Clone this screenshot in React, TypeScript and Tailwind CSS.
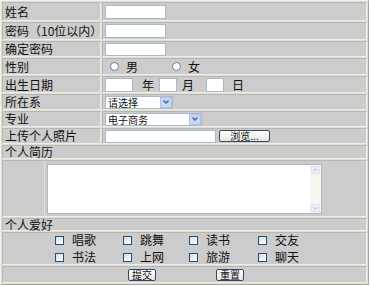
import type { ReactNode } from 'react'

const font = { fontFamily: '"Noto Sans CJK SC", "Noto Sans", sans-serif' }

// classic inset cell look of an old table border=1 page
const cell =
  'p-0 bg-[#cccccc] border border-t-[#b9b6ad] border-l-[#b9b6ad] border-b-[#efede6] border-r-[#efede6] align-middle'

function Row({ label, h, children }: { label: string; h: number; children?: ReactNode }) {
  return (
    <tr>
      <td className={cell}>
        <div className="flex items-center pl-[2px] text-[12px] leading-[14px]" style={{ height: h }}>
          {label}
        </div>
      </td>
      <td className={cell}>
        <div className="flex items-center pl-[1px]" style={{ height: h }}>
          {children}
        </div>
      </td>
    </tr>
  )
}

function TextBox({ w, h = 14 }: { w: number; h?: number }) {
  return (
    <span
      className="inline-block bg-white border border-[#a5b9d1]"
      style={{ width: w, height: h }}
    />
  )
}

function Radio({ label }: { label: string }) {
  return (
    <span className="flex items-center">
      <span className="w-[9px] h-[9px] rounded-full border border-[#5b7ea6] bg-white" />
      <span className="ml-[7px] text-[12px] leading-[14px]">{label}</span>
    </span>
  )
}

function Select({ w, text }: { w: number; text: string }) {
  return (
    <span
      className="flex items-center justify-between bg-white border border-[#a5b9d1] h-[13px]"
      style={{ width: w }}
    >
      <span className="pl-[2px] text-[10px] leading-[11px]">{text}</span>
      <span className="flex items-center justify-center w-[12px] h-[11px] bg-[#c8d6f5] border border-[#b0c3ea]">
        <svg width="8" height="6" viewBox="0 0 8 6">
          <path d="M1.5 1.5 L4 4 L6.5 1.5" fill="none" stroke="#4d6185" strokeWidth="1.4" />
        </svg>
      </span>
    </span>
  )
}

function Check({ label }: { label: string }) {
  return (
    <span className="flex items-center">
      <span className="w-[9px] h-[9px] border border-[#1f4f7d] bg-gradient-to-br from-[#dcdcd6] to-white" />
      <span className="ml-[8px] text-[12px] leading-[14px]">{label}</span>
    </span>
  )
}

function SmallButton({ label, w }: { label: string; w: number }) {
  return (
    <span
      className="flex items-center justify-center h-[12px] rounded-[2px] border border-[#2f4a6b] bg-gradient-to-b from-white to-[#e6e4dc] text-[10px] leading-[10px]"
      style={{ width: w }}
    >
      {label}
    </span>
  )
}

export default function App() {
  return (
    <div className="w-[371px] h-[286px] bg-white text-[#111]" style={font}>
      <table className="w-[369px] border-separate border-spacing-[1px] bg-[#e0ddd5] border border-t-[#f2f0ea] border-l-[#f2f0ea] border-b-[#a9a598] border-r-[#a9a598]">
        <colgroup>
          <col className="w-[99px]" />
          <col />
        </colgroup>
        <tbody>
          <Row label="姓名" h={17}>
            <span className="pl-[1px] flex"><TextBox w={61} /></span>
          </Row>
          <Row label="密码（10位以内）" h={16}>
            <span className="pl-[1px] flex"><TextBox w={61} /></span>
          </Row>
          <Row label="确定密码" h={14}>
            <span className="pl-[1px] flex"><TextBox w={61} h={13} /></span>
          </Row>
          <Row label="性别" h={15}>
            <span className="flex items-center pl-[6px] gap-[34px]">
              <Radio label="男" />
              <Radio label="女" />
            </span>
          </Row>
          <Row label="出生日期" h={15}>
            <span className="flex items-center pl-[1px] text-[12px] leading-[14px]">
              <TextBox w={28} h={14} />
              <span className="ml-[9px] mr-[5px]">年</span>
              <TextBox w={18} h={14} />
              <span className="ml-[5px] mr-[12px]">月</span>
              <TextBox w={18} h={14} />
              <span className="ml-[8px]">日</span>
            </span>
          </Row>
          <Row label="所在系" h={14}>
            <span className="pl-[1px] flex"><Select w={68} text="请选择" /></span>
          </Row>
          <Row label="专业" h={14}>
            <span className="pl-[1px] flex"><Select w={97} text="电子商务" /></span>
          </Row>
          <Row label="上传个人照片" h={14}>
            <span className="flex items-center pl-[1px]">
              <TextBox w={111} h={13} />
              <span className="ml-[3px]">
                <SmallButton label="浏览..." w={51} />
              </span>
            </span>
          </Row>
          <tr>
            <td colSpan={2} className={cell}>
              <div className="flex items-center h-[12px] pl-[2px] text-[12px] leading-[14px]">个人简历</div>
            </td>
          </tr>
          <tr>
            <td colSpan={2} className={cell}>
              <div className="flex items-center h-[55px]">
                <div className="w-[42px] h-full border-r border-[#e3e0d8]" />
                <div className="ml-[2px] flex w-[275px] h-[50px] bg-white border border-[#a5b9d1]">
                  <div className="flex-1" />
                  <div className="w-[11px] h-full bg-[#f6f5f0] flex flex-col justify-between items-center py-[1px]">
                    <svg width="9" height="8" viewBox="0 0 9 8">
                      <rect x="0.5" y="0.5" width="8" height="7" fill="#eef0f6" stroke="#dfe3ec" />
                      <path d="M2 5 L4.5 2.5 L7 5" fill="none" stroke="#b7bccb" strokeWidth="1" />
                    </svg>
                    <svg width="9" height="8" viewBox="0 0 9 8">
                      <rect x="0.5" y="0.5" width="8" height="7" fill="#eef0f6" stroke="#dfe3ec" />
                      <path d="M2 3 L4.5 5.5 L7 3" fill="none" stroke="#b7bccb" strokeWidth="1" />
                    </svg>
                  </div>
                </div>
              </div>
            </td>
          </tr>
          <tr>
            <td colSpan={2} className={cell}>
              <div className="flex items-center h-[11px] pl-[2px] text-[12px] leading-[12px]">个人爱好</div>
            </td>
          </tr>
          <tr>
            <td colSpan={2} className={cell}>
              <div className="h-[31px] pl-[52px] grid grid-cols-[68px_66px_69px_68px] content-center gap-y-[3px]">
                <Check label="唱歌" />
                <Check label="跳舞" />
                <Check label="读书" />
                <Check label="交友" />
                <Check label="书法" />
                <Check label="上网" />
                <Check label="旅游" />
                <Check label="聊天" />
              </div>
            </td>
          </tr>
          <tr>
            <td colSpan={2} className={cell}>
              <div className="flex items-center h-[15px] pl-[125px] gap-[60px]">
                <SmallButton label="提交" w={28} />
                <SmallButton label="重置" w={28} />
              </div>
            </td>
          </tr>
        </tbody>
      </table>
    </div>
  )
}
